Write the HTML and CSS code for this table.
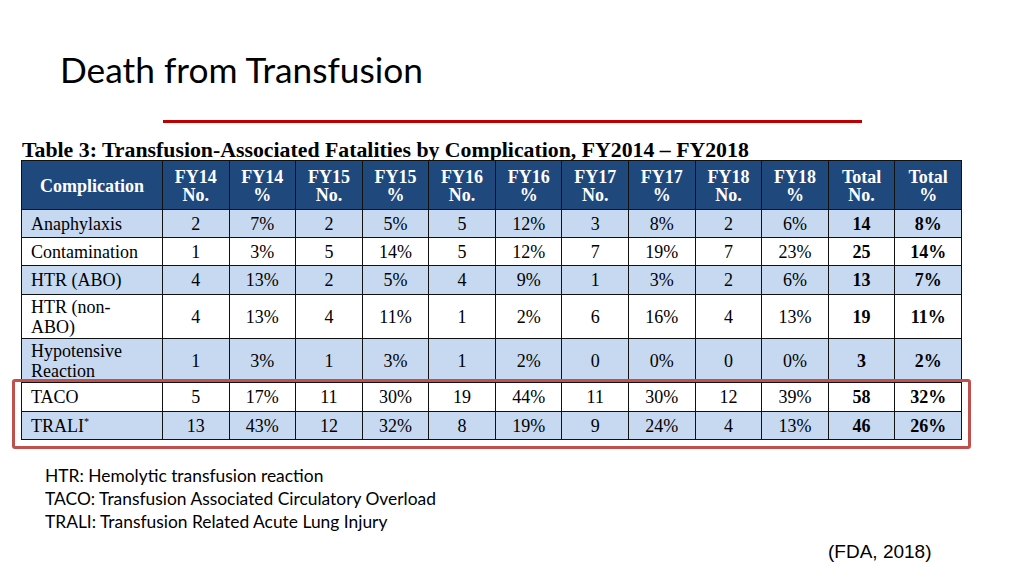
FILE: index.html
```html
<!DOCTYPE html>
<html>
<head>
<meta charset="utf-8">
<link rel="stylesheet" href="styles.css">
</head>
<body>
<div class="slide">
  <h1 class="title">Death from Transfusion</h1>
  <div class="rule"></div>
  <div class="caption">Table 3: Transfusion-Associated Fatalities by Complication, FY2014 – FY2018</div>
  <div class="table-wrap">
    <table class="data">
      <colgroup>
        <col class="c-first">
        <col><col><col><col><col><col><col><col><col><col><col><col>
      </colgroup>
      <thead>
        <tr class="r-head">
          <th>Complication</th>
          <th>FY14<br>No.</th><th>FY14<br>%</th>
          <th>FY15<br>No.</th><th>FY15<br>%</th>
          <th>FY16<br>No.</th><th>FY16<br>%</th>
          <th>FY17<br>No.</th><th>FY17<br>%</th>
          <th>FY18<br>No.</th><th>FY18<br>%</th>
          <th>Total<br>No.</th><th>Total<br>%</th>
        </tr>
      </thead>
      <tbody>
        <tr class="blue r28">
          <td class="name">Anaphylaxis</td>
          <td>2</td><td>7%</td><td>2</td><td>5%</td><td>5</td><td>12%</td><td>3</td><td>8%</td><td>2</td><td>6%</td><td class="b">14</td><td class="b">8%</td>
        </tr>
        <tr class="white r28">
          <td class="name">Contamination</td>
          <td>1</td><td>3%</td><td>5</td><td>14%</td><td>5</td><td>12%</td><td>7</td><td>19%</td><td>7</td><td>23%</td><td class="b">25</td><td class="b">14%</td>
        </tr>
        <tr class="blue r29">
          <td class="name">HTR (ABO)</td>
          <td>4</td><td>13%</td><td>2</td><td>5%</td><td>4</td><td>9%</td><td>1</td><td>3%</td><td>2</td><td>6%</td><td class="b">13</td><td class="b">7%</td>
        </tr>
        <tr class="white r44">
          <td class="name two">HTR (non-<br>ABO)</td>
          <td>4</td><td>13%</td><td>4</td><td>11%</td><td>1</td><td>2%</td><td>6</td><td>16%</td><td>4</td><td>13%</td><td class="b">19</td><td class="b">11%</td>
        </tr>
        <tr class="blue r44">
          <td class="name two">Hypotensive<br>Reaction</td>
          <td>1</td><td>3%</td><td>1</td><td>3%</td><td>1</td><td>2%</td><td>0</td><td>0%</td><td>0</td><td>0%</td><td class="b">3</td><td class="b">2%</td>
        </tr>
        <tr class="white r29">
          <td class="name">TACO</td>
          <td>5</td><td>17%</td><td>11</td><td>30%</td><td>19</td><td>44%</td><td>11</td><td>30%</td><td>12</td><td>39%</td><td class="b">58</td><td class="b">32%</td>
        </tr>
        <tr class="blue r28">
          <td class="name">TRALI<sup>*</sup></td>
          <td>13</td><td>43%</td><td>12</td><td>32%</td><td>8</td><td>19%</td><td>9</td><td>24%</td><td>4</td><td>13%</td><td class="b">46</td><td class="b">26%</td>
        </tr>
      </tbody>
    </table>
    <div class="highlight"></div>
  </div>
  <div class="notes">
    <div>HTR: Hemolytic transfusion reaction</div>
    <div>TACO: Transfusion Associated Circulatory Overload</div>
    <div>TRALI: Transfusion Related Acute Lung Injury</div>
  </div>
  <div class="cite">(FDA, 2018)</div>
</div>
</body>
</html>
```

FILE: styles.css
```css
* { box-sizing: border-box; }
html, body { margin: 0; padding: 0; background: #ffffff; }
.slide {
  width: 1024px;
  height: 576px;
  overflow: hidden;
  background: #ffffff;
  display: flex;
  flex-direction: column;
  align-items: flex-start;
}
.title {
  margin: 48px 0 0 60px;
  font-family: Lato, "Open Sans", sans-serif;
  font-weight: 400;
  font-size: 35.3px;
  line-height: 44px;
  color: #000000;
}
.rule {
  margin: 28px 0 0 163px;
  width: 699px;
  height: 3px;
  background: #c00000;
}
.caption {
  margin: 17px 0 0 22px;
  font-family: "Liberation Serif", "Times New Roman", serif;
  font-weight: 700;
  font-size: 21.8px;
  line-height: 20px;
  color: #000000;
  white-space: nowrap;
}
.table-wrap {
  position: relative;
  margin: 0 0 0 21px;
}
.data {
  width: 941px;
  table-layout: fixed;
  border-collapse: collapse;
  font-family: "Liberation Serif", "Times New Roman", serif;
  font-size: 18px;
  color: #000000;
}
.data .c-first { width: 141px; }
.data th, .data td {
  border: 1.5px solid #111111;
  padding: 0;
  text-align: center;
  vertical-align: middle;
  overflow: hidden;
}
.r-head { height: 49px; }
.r-head th {
  background: #1f497d;
  color: #ffffff;
  font-weight: 700;
  line-height: 18px;
  padding-top: 1px;
}
.r28 { height: 28px; }
.r29 { height: 29px; }
.r44 { height: 44px; }
.blue td { background: #c6d9f1; }
.white td { background: #ffffff; }
.data td { line-height: 20px; }
.data td.name {
  text-align: left;
  padding-left: 9px;
  white-space: nowrap;
}
.data td.two {
  vertical-align: top;
  line-height: 20px;
  padding-top: 2px;
}
.data td.b { font-weight: 700; }
.data sup { font-size: 10px; line-height: 0; vertical-align: 7px; }
.highlight {
  position: absolute;
  left: -9px;
  top: 219px;
  width: 959px;
  height: 70px;
  border: 3.5px solid #c0504d;
  border-radius: 3px;
}
.notes {
  margin: 24px 0 0 45px;
  font-family: Lato, "Open Sans", sans-serif;
  font-size: 17.4px;
  line-height: 23px;
  color: #000000;
}
.cite {
  margin: 8px 0 0 828px;
  font-family: "Liberation Sans", Arial, sans-serif;
  font-size: 19px;
  line-height: 22px;
  color: #000000;
  white-space: nowrap;
}
```
